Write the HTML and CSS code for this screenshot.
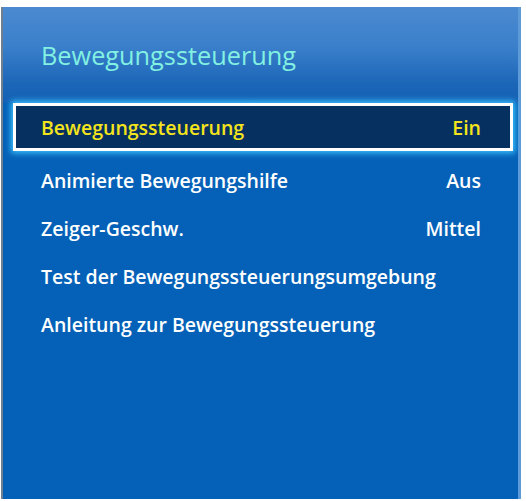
FILE: index.html
```html
<!DOCTYPE html>
<html lang="de">
<head>
<meta charset="utf-8">
<title>Bewegungssteuerung</title>
<link rel="stylesheet" href="styles.css">
</head>
<body>
<div class="panel">
  <div class="header">
    <h1 class="title">Bewegungssteuerung</h1>
  </div>
  <ul class="menu">
    <li class="item selected"><span class="label">Bewegungssteuerung</span><span class="value">Ein</span></li>
    <li class="item"><span class="label">Animierte Bewegungshilfe</span><span class="value">Aus</span></li>
    <li class="item"><span class="label">Zeiger-Geschw.</span><span class="value">Mittel</span></li>
    <li class="item"><span class="label">Test der Bewegungssteuerungsumgebung</span></li>
    <li class="item"><span class="label">Anleitung zur Bewegungssteuerung</span></li>
  </ul>
</div>
</body>
</html>
```

FILE: styles.css
```css
html, body {
  margin: 0;
  padding: 0;
  background: #ffffff;
}
body {
  font-family: "Open Sans", "Noto Sans", sans-serif;
}
.panel {
  margin: 7px 0 0 1px;
  width: 520px;
  height: 492px;
  box-sizing: border-box;
  border-left: 2px solid #6f7f90;
  border-right: 3px solid #5d9ad8;
  background: #0561b7;
  display: flex;
  flex-direction: column;
}
.header {
  height: 96px;
  flex: none;
  background: linear-gradient(to bottom, #4b8ad0 0%, #3b80cb 40%, #1c66b8 80%, #1360b4 100%);
  display: flex;
  align-items: center;
  padding-left: 38px;
}
.title {
  margin: 0;
  font-weight: 500;
  font-size: 25.3px;
  color: #82f0e2;
  letter-spacing: 0;
}
.menu {
  list-style: none;
  margin: 0;
  padding: 0 5px 0 10px;
  display: flex;
  flex-direction: column;
}
.item {
  height: 48px;
  display: flex;
  align-items: center;
  justify-content: space-between;
  padding: 0 32px 0 28px;
  font-size: 19.5px;
  font-weight: 600;
  color: #ffffff;
  box-sizing: border-box;
}
.item.selected {
  background: #06305f;
  border: 3px solid #ffffff;
  padding: 0 29px 0 25px;
  margin-bottom: 5px;
  color: #f4e41c;
  box-shadow: 0 0 6px 2px #3cc4ff;
}
```
